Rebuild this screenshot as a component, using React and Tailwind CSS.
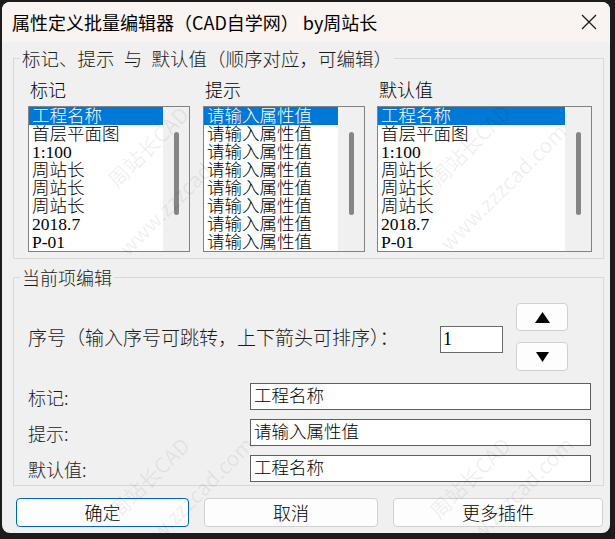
import React from 'react';

const cjk = "font-['Noto_Sans_CJK_SC',sans-serif]";
const serif = "font-['Liberation_Serif','Noto_Sans_CJK_SC',serif]";

const tags = ['工程名称', '首层平面图', '1:100', '周站长', '周站长', '周站长', '2018.7', 'P-01'];
const prompts = Array(8).fill('请输入属性值');

const ListBox = ({ items, className }) => (
  <div className={`flex h-[146px] border border-[#828282] bg-white ${className}`}>
    <div className="flex-1 overflow-hidden">
      {items.map((item, i) => (
        <div
          key={i}
          className={`h-[18px] pl-[3px] leading-[18px] text-[17.5px] font-light whitespace-nowrap ${
            i === 0 ? 'bg-[#0078d7] text-white' : 'text-black'
          }`}
        >
          {item}
        </div>
      ))}
    </div>
    <div className="w-[26px] bg-[#f0f0f0] flex justify-center pt-[25px]">
      <div className="w-[5px] h-[83px] rounded-full bg-[#858585]" />
    </div>
  </div>
);

const Field = ({ label, value }) => (
  <div className="flex items-center">
    <div className="w-[222px] text-[18px] leading-[22px] font-light text-[#1a1a1a]">{label}</div>
    <div className={`w-[341px] h-[27px] border border-[#5f5f5f] bg-white pl-[3px] text-[17.5px] leading-[25px] font-light ${serif}`}>
      {value}
    </div>
  </div>
);

const Watermark = ({ x, y, text }) => (
  <span
    className="absolute pointer-events-none whitespace-nowrap text-[21px] text-black/[0.07] -translate-x-1/2 -translate-y-1/2 rotate-[-45deg]"
    style={{ left: x, top: y }}
  >
    {text}
  </span>
);

export default function App() {
  return (
    <div className={`w-[615px] h-[539px] bg-[#1c1c1c] pt-[2px] pl-[2px] ${cjk}`}>
      <div className="relative w-[608px] h-[531px] rounded-[8px] overflow-hidden bg-[#f0f0f0] text-black">
        {/* title bar */}
        <div className="h-[40px] bg-[#f9f3f1] flex items-center justify-between pl-[10px] pr-[13px]">
          <span className="text-[18px] leading-[24px]">属性定义批量编辑器（CAD自学网） by周站长</span>
          <svg width="16" height="16" viewBox="0 0 16 16">
            <path d="M1 1L15 15M15 1L1 15" stroke="#1a1a1a" strokeWidth="1.3" />
          </svg>
        </div>

        {/* list group */}
        <fieldset className="ml-[11px] mt-[5px] w-[591px] border border-[#d8d8d8]">
          <legend className="ml-[6px] px-[2px] text-[18.5px] leading-[22px] font-light text-[#1a1a1a] whitespace-pre">
            {'标记、提示\u2002与\u2002默认值（顺序对应，可编辑）'}
          </legend>
          <div className="flex pl-[14px] pt-[9px] pb-[6px]">
            <div className="flex flex-col w-[162px]">
              <div className="pl-[2px] h-[22px] mb-[6px] text-[18px] leading-[22px] font-light">标记</div>
              <ListBox items={tags} className={serif} />
            </div>
            <div className="flex flex-col w-[162px] ml-[13px]">
              <div className="pl-[2px] h-[22px] mb-[6px] text-[18px] leading-[22px] font-light">提示</div>
              <ListBox items={prompts} className={serif} />
            </div>
            <div className="flex flex-col w-[215px] ml-[12px]">
              <div className="pl-[2px] h-[22px] mb-[6px] text-[18px] leading-[22px] font-light">默认值</div>
              <ListBox items={tags} className={serif} />
            </div>
          </div>
        </fieldset>

        {/* current item group */}
        <fieldset className="ml-[11px] mt-[7px] w-[591px] border border-[#d8d8d8]">
          <legend className="ml-[6px] px-[2px] text-[18px] leading-[22px] font-light text-[#1a1a1a]">当前项编辑</legend>
          <div className="pl-[14px] pt-[15px] pb-[3px]">
            <div className="flex items-start">
              <div className="w-[412px] mt-[23px] text-[19px] leading-[22px] font-light text-[#1a1a1a] whitespace-nowrap">
                序号（输入序号可跳转，上下箭头可排序）：
              </div>
              <div className={`w-[63px] h-[27px] mt-[23px] border border-[#6a6a6a] bg-white pl-[2px] text-[18px] leading-[25px] ${serif}`}>
                1
              </div>
              <div className="ml-[13px] flex flex-col">
                <button className="w-[52px] h-[28px] rounded-[4px] border border-[#d0d0d0] bg-[#fdfdfd] flex items-center justify-center">
                  <svg width="15" height="11" viewBox="0 0 15 11">
                    <path d="M7.5 0L15 11H0Z" fill="#000" />
                  </svg>
                </button>
                <button className="mt-[11px] w-[52px] h-[29px] rounded-[4px] border border-[#d0d0d0] bg-[#fdfdfd] flex items-center justify-center">
                  <svg width="13" height="10" viewBox="0 0 13 10">
                    <path d="M0 0H13L6.5 10Z" fill="#000" />
                  </svg>
                </button>
              </div>
            </div>
            <div className="mt-[12px] flex flex-col gap-[9px]">
              <Field label="标记:" value="工程名称" />
              <Field label="提示:" value="请输入属性值" />
              <Field label="默认值:" value="工程名称" />
            </div>
          </div>
        </fieldset>

        {/* buttons */}
        <div className="flex pl-[14px] mt-[12px] text-[18px] font-light">
          <button className="w-[173px] h-[29px] rounded-[4px] border border-[#0067c0] bg-[#fdfdfd]">确定</button>
          <button className="ml-[15px] w-[174px] h-[29px] rounded-[4px] border border-[#d0d0d0] bg-[#fdfdfd]">取消</button>
          <button className="ml-[15px] w-[210px] h-[29px] rounded-[4px] border border-[#d0d0d0] bg-[#fdfdfd]">更多插件</button>
        </div>

        {/* watermark */}
        <Watermark x={146} y={145} text="周站长CAD" />
        <Watermark x={180} y={190} text="www.zzzcad.com" />
        <Watermark x={468} y={143} text="周站长CAD" />
        <Watermark x={501} y={185} text="www.zzzcad.com" />
        <Watermark x={147} y={476} text="周站长CAD" />
        <Watermark x={188} y={498} text="www.zzzcad.com" />
        <Watermark x={468} y={476} text="周站长CAD" />
        <Watermark x={508} y={498} text="www.zzzcad.com" />
      </div>
    </div>
  );
}
